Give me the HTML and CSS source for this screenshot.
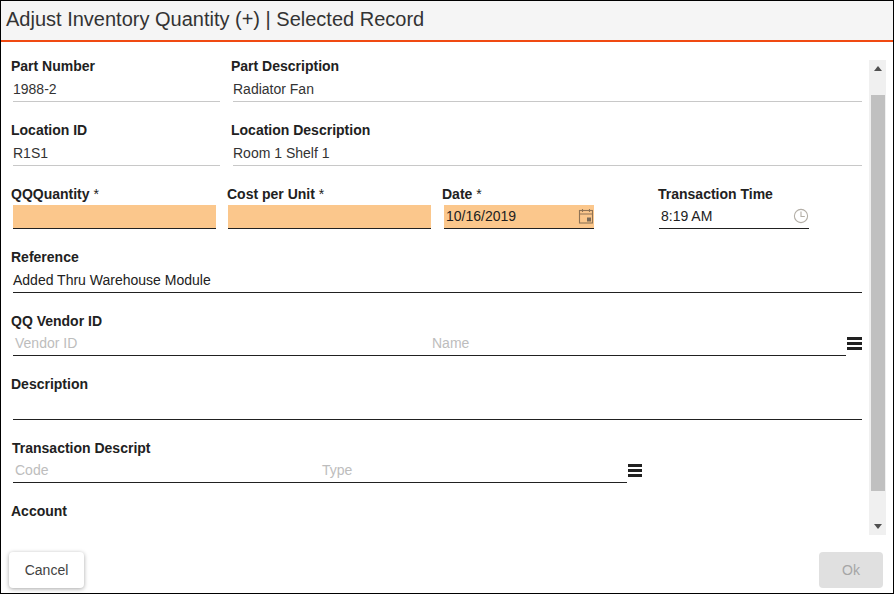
FILE: index.html

```html
<!DOCTYPE html>
<html>
<head>
  <meta charset="utf-8" />
  <title>Adjust Inventory Quantity</title>
  <link rel="stylesheet" href="styles.css">
</head>
<body>
  <div class="dialog">
    <div class="dialog-title">Adjust Inventory Quantity (+) | Selected Record</div>
    <div class="dialog-body">
      <div class="form">
        <div class="row row-tall">
          <div class="field w-part">
            <label>Part Number</label>
            <div class="value readonly">1988-2</div>
          </div>
          <div class="field w-desc">
            <label>Part Description</label>
            <div class="value readonly">Radiator Fan</div>
          </div>
        </div>
        <div class="row row-tall">
          <div class="field w-part">
            <label>Location ID</label>
            <div class="value readonly">R1S1</div>
          </div>
          <div class="field w-desc">
            <label>Location Description</label>
            <div class="value readonly">Room 1 Shelf 1</div>
          </div>
        </div>
        <div class="row">
          <div class="field w-qty">
            <label>QQQuantity <span class="star">*</span></label>
            <div class="value required"></div>
          </div>
          <div class="field w-cost">
            <label>Cost per Unit <span class="star">*</span></label>
            <div class="value required"></div>
          </div>
          <div class="field w-date">
            <label>Date <span class="star">*</span></label>
            <div class="value required with-icon">
              <span>10/16/2019</span>
              <svg class="icon calendar" width="15" height="16" viewBox="0 0 15 16" fill="none" stroke="#8f7355" stroke-width="1.1">
                <rect x="1.5" y="2.5" width="13" height="12.5" />
                <path d="M1.5 6h13M4.5 1v3M11.5 1v3" />
                <rect x="9" y="9.5" width="4" height="4" fill="#7a6a58" stroke="none" />
              </svg>
            </div>
          </div>
          <div class="field w-time">
            <label>Transaction Time</label>
            <div class="value with-icon">
              <span>8:19 AM</span>
              <svg class="icon" width="16" height="16" viewBox="0 0 16 16" fill="none" stroke="#b3aea6" stroke-width="1.1">
                <circle cx="8" cy="8" r="6.6" />
                <path d="M8 3.6v4.9h3.8" />
              </svg>
            </div>
          </div>
        </div>
        <div class="row">
          <div class="field w-full">
            <label>Reference</label>
            <div class="value value-low">Added Thru Warehouse Module</div>
          </div>
        </div>
        <div class="row">
          <div class="field w-full">
            <label>QQ Vendor ID</label>
            <div class="lookup">
              <div class="value split">
                <span class="hint vendor-id">Vendor ID</span>
                <span class="hint">Name</span>
              </div>
              <svg class="menu-icon" width="15" height="13" viewBox="0 0 15 13" preserveAspectRatio="none"><path d="M0 0h15v3H0zM0 5h15v3H0zM0 10h15v3H0z" fill="#212121" /></svg>
            </div>
          </div>
        </div>
        <div class="row">
          <div class="field w-full">
            <label>Description</label>
            <div class="value value-low"></div>
          </div>
        </div>
        <div class="row">
          <div class="field w-trans">
            <label>Transaction Descript</label>
            <div class="lookup">
              <div class="value split">
                <span class="hint code">Code</span>
                <span class="hint">Type</span>
              </div>
              <svg class="menu-icon" width="14" height="13" viewBox="0 0 15 13" preserveAspectRatio="none"><path d="M0 0h15v3H0zM0 5h15v3H0zM0 10h15v3H0z" fill="#212121" /></svg>
            </div>
          </div>
        </div>
        <div class="row">
          <div class="field w-full">
            <label>Account</label>
          </div>
        </div>
      </div>
      <div class="scrollbar">
        <div class="arrow up"></div>
        <div class="track"><div class="thumb"></div></div>
        <div class="arrow down"></div>
      </div>
    </div>
    <div class="dialog-footer">
      <button class="btn">Cancel</button>
      <button class="btn btn-disabled" disabled>Ok</button>
    </div>
  </div>
</body>
</html>
```

FILE: styles.css

```css
html,
body {
  margin: 0;
  padding: 0;
  height: 100%;
  overflow: hidden;
}
body {
  font-family: "Liberation Sans", Arial, sans-serif;
  font-size: 14px;
  color: #212121;
  background: #fff;
}
.dialog {
  box-sizing: border-box;
  width: 894px;
  height: 594px;
  border: 1px solid #000;
  display: flex;
  flex-direction: column;
}
.dialog-title {
  height: 39px;
  line-height: 37px;
  padding-left: 5px;
  font-size: 20px;
  color: #333;
  background: #f5f5f5;
  border-bottom: 2px solid #f04a12;
  flex: none;
}
.dialog-body {
  flex: 1;
  display: flex;
  min-height: 0;
}
.form {
  width: 868px;
  padding: 16px 0 0 10px;
  box-sizing: border-box;
  overflow: hidden;
}
.row {
  display: flex;
  height: 63.4px;
}
.row-tall {
  height: 64px;
}
.field label {
  display: block;
  height: 16px;
  line-height: 16px;
  font-weight: bold;
  color: #212121;
  white-space: nowrap;
}
.star {
  font-weight: normal;
}
.value {
  box-sizing: border-box;
  height: 24px;
  margin: 3px 0 0 2px;
  line-height: 23px;
  border-bottom: 1px solid #212121;
  white-space: nowrap;
}
.value-low {
  margin-top: 4px;
}
.readonly {
  border-bottom-color: #c8c8c8;
  color: #333;
  margin-top: 4px;
}
.required {
  background: #fbc78c;
}
.with-icon {
  display: flex;
  justify-content: space-between;
  align-items: center;
  padding: 0 0 0 2px;
}
.icon {
  flex: none;
  margin-bottom: 1px;
}
.calendar {
  margin-right: 1px;
}
.w-part {
  width: 209px;
  margin-right: 11px;
}
.w-desc {
  width: 631px;
}
.w-qty {
  width: 205px;
  margin-right: 11px;
}
.w-cost {
  width: 204px;
  margin-right: 11px;
}
.w-cost .value {
  margin-left: 1px;
}
.w-date {
  width: 152px;
  margin-right: 64px;
}
.w-time {
  width: 151px;
}
.w-time .value {
  margin-left: 1px;
}
.w-full {
  width: 851px;
}
.w-trans {
  width: 631px;
}
.w-trans label {
  padding-left: 1px;
}
.lookup {
  display: flex;
  align-items: center;
}
.lookup .value {
  flex: 1;
  display: flex;
}
.lookup .menu-icon {
  flex: none;
  margin-left: 1px;
  margin-top: 2px;
}
.hint {
  color: #bdbdbd;
  padding-left: 2px;
}
.vendor-id {
  width: 415px;
}
.code {
  width: 305px;
}
.scrollbar {
  width: 17px;
  margin-top: 18px;
  background: #f0f0f0;
  display: flex;
  flex-direction: column;
  align-items: center;
  flex: none;
}
.track {
  flex: 1;
  width: 100%;
  padding-top: 18px;
}
.thumb {
  width: 14px;
  height: 396px;
  margin: 0 auto;
  background: #c0c0c0;
}
.arrow {
  flex: none;
  width: 0;
  height: 0;
  margin: 6px 0;
  border-left: 4px solid transparent;
  border-right: 4px solid transparent;
}
.arrow.up {
  border-bottom: 5px solid #505050;
}
.arrow.down {
  border-top: 5px solid #505050;
}
.dialog-footer {
  flex: none;
  height: 58px;
  display: flex;
  justify-content: space-between;
  padding: 17px 10px 0 8px;
  box-sizing: border-box;
}
.btn {
  font-family: "Liberation Sans", Arial, sans-serif;
  font-size: 14px;
  width: 75px;
  height: 36px;
  border: none;
  border-radius: 4px;
  background: #fff;
  color: #424242;
  box-shadow: 0 1px 4px rgba(0, 0, 0, 0.35);
}
.btn-disabled {
  width: 64px;
  background: #e0e0e0;
  color: #a6a6a6;
  box-shadow: none;
}
```
